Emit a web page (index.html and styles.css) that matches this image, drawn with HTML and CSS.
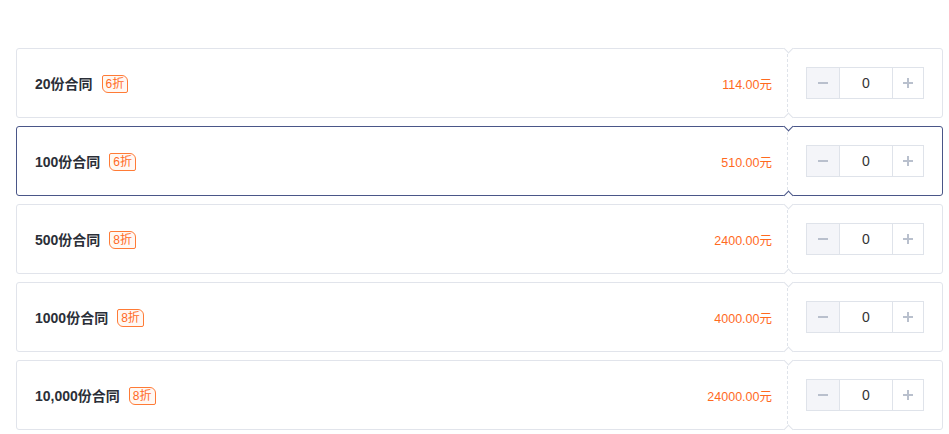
FILE: index.html
```html
<!DOCTYPE html>
<html lang="zh-CN">

<head>
  <meta charset="utf-8" />
  <title>合同套餐</title>
  <link rel="stylesheet" href="styles.css">
</head>

<body>
  <div class="packages">
    <div class="pkg">
      <div class="pkg-main">
        <span class="pkg-name">20份合同</span>
        <span class="pkg-tag">6折</span>
        <span class="pkg-price">114.00元</span>
      </div>
      <div class="pkg-qty">
        <div class="stepper">
          <span class="step step-minus"></span>
          <span class="step-value">0</span>
          <span class="step step-plus"></span>
        </div>
      </div>
    </div>

    <div class="pkg active">
      <div class="pkg-main">
        <span class="pkg-name">100份合同</span>
        <span class="pkg-tag">6折</span>
        <span class="pkg-price">510.00元</span>
      </div>
      <div class="pkg-qty">
        <div class="stepper">
          <span class="step step-minus"></span>
          <span class="step-value">0</span>
          <span class="step step-plus"></span>
        </div>
      </div>
    </div>

    <div class="pkg">
      <div class="pkg-main">
        <span class="pkg-name">500份合同</span>
        <span class="pkg-tag">8折</span>
        <span class="pkg-price">2400.00元</span>
      </div>
      <div class="pkg-qty">
        <div class="stepper">
          <span class="step step-minus"></span>
          <span class="step-value">0</span>
          <span class="step step-plus"></span>
        </div>
      </div>
    </div>

    <div class="pkg">
      <div class="pkg-main">
        <span class="pkg-name">1000份合同</span>
        <span class="pkg-tag">8折</span>
        <span class="pkg-price">4000.00元</span>
      </div>
      <div class="pkg-qty">
        <div class="stepper">
          <span class="step step-minus"></span>
          <span class="step-value">0</span>
          <span class="step step-plus"></span>
        </div>
      </div>
    </div>

    <div class="pkg">
      <div class="pkg-main">
        <span class="pkg-name">10,000份合同</span>
        <span class="pkg-tag">8折</span>
        <span class="pkg-price">24000.00元</span>
      </div>
      <div class="pkg-qty">
        <div class="stepper">
          <span class="step step-minus"></span>
          <span class="step-value">0</span>
          <span class="step step-plus"></span>
        </div>
      </div>
    </div>
  </div>
</body>

</html>
```

FILE: styles.css
```css
* {
  box-sizing: border-box;
}

body {
  margin: 0;
  background-color: #fff;
  color: #2b2f38;
  font: 12px "Liberation Sans", "Noto Sans CJK SC", sans-serif;
}

.packages {
  padding: 48px 6px 0 16px;
}

/* one ticket-shaped row */
.pkg {
  display: flex;
  height: 70px;
  margin-bottom: 8px;
  border: 1px solid #e1e4eb;
  border-radius: 3px;
  --edge: #e1e4eb;
}

.pkg.active {
  border-color: #4a5688;
  --edge: #4a5688;
}

.pkg-main {
  flex: 1;
  display: flex;
  align-items: center;
  padding: 0 15px 0 18px;
}

.pkg-name {
  font-size: 14px;
  font-weight: bold;
}

.pkg-tag {
  margin-left: 9px;
  height: 18px;
  padding: 0 3px;
  line-height: 16px;
  font-size: 12px;
  color: #ff6a1f;
  background-color: #fff8f3;
  border: 1px solid #ff7b36;
  border-radius: 2px 6px 2px 6px;
  position: relative;
  top: 1px;
}

.pkg-price {
  margin-left: auto;
  font-size: 12.5px;
  color: #ff6a1f;
}

.pkg-qty {
  position: relative;
  width: 155px;
  display: flex;
  align-items: center;
  justify-content: center;
  border-left: 1px dashed #dfe3ea;
}

/* the notches at both ends of the dashed line */
.pkg-qty::before,
.pkg-qty::after {
  content: "";
  position: absolute;
  left: -3.5px;
  width: 6px;
  height: 6px;
  background-color: #fff;
  transform: rotate(45deg);
}

.pkg-qty::before {
  top: -4px;
  border-right: 1px solid var(--edge);
  border-bottom: 1px solid var(--edge);
}

.pkg-qty::after {
  bottom: -4px;
  border-top: 1px solid var(--edge);
  border-left: 1px solid var(--edge);
}

.stepper {
  display: flex;
  height: 32px;
  border: 1px solid #dfe3ea;
}

.step {
  position: relative;
  width: 32px;
}

.step-minus {
  background-color: #f4f5f9;
}

.step-plus {
  width: 30px;
}

.step-value {
  width: 54px;
  line-height: 30px;
  text-align: center;
  font-size: 14px;
  color: #333;
  border-left: 1px solid #dfe3ea;
  border-right: 1px solid #dfe3ea;
}

.step::before,
.step-plus::after {
  content: "";
  position: absolute;
  left: 50%;
  top: 50%;
  background-color: #b9c0cd;
}

.step-minus::before {
  width: 10px;
  height: 2px;
  margin: -1px 0 0 -5px;
}

.step-plus::before {
  width: 10px;
  height: 1.5px;
  margin: -0.75px 0 0 -5px;
}

.step-plus::after {
  width: 1.5px;
  height: 10px;
  margin: -5px 0 0 -0.75px;
}
```
